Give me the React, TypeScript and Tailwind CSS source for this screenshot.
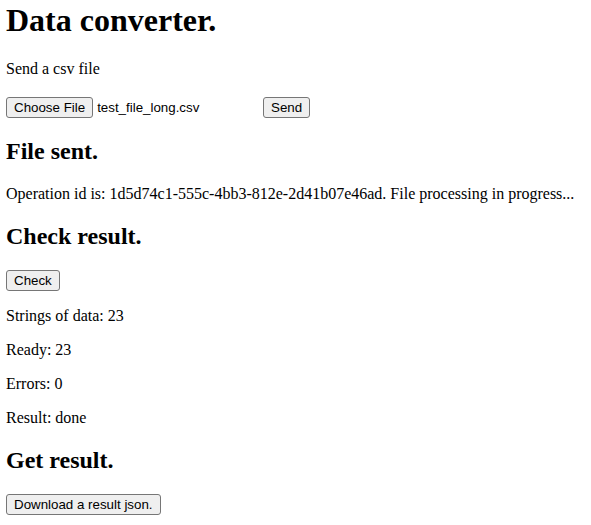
import React from "react";

const btn =
  "inline-block bg-[#efefef] border border-[#767676] rounded-[3px] px-[7px] py-[2px] text-[13.333px] leading-[normal] text-black font-['Liberation_Sans',Arial,sans-serif] align-baseline";

export default function App() {
  return (
    <div className="font-['Liberation_Serif','Times_New_Roman',serif] text-base leading-[normal] text-black bg-white pl-[6px] pt-[2px] min-h-[525px]">
      <h1 className="text-[32px] font-bold leading-[normal] m-0 mb-[21.44px]">Data converter.</h1>
      <p className="my-[16px]">Send a csv file</p>
      <div className="mt-[19px] mb-[16px]">
        <span className="inline-block w-[253px] whitespace-nowrap align-baseline">
          <button className={btn}>Choose File</button>
          <span className="ml-[4px] text-[13.333px] font-['Liberation_Sans',Arial,sans-serif]">test_file_long.csv</span>
        </span>{" "}
        <button className={btn}>Send</button>
      </div>
      <h2 className="text-[24px] font-bold leading-[normal] my-[19.92px]">File sent.</h2>
      <p className="my-[16px]">
        Operation id is: 1d5d74c1-555c-4bb3-812e-2d41b07e46ad. File processing in progress...
      </p>
      <h2 className="text-[24px] font-bold leading-[normal] my-[19.92px]">Check result.</h2>
      <div className="my-[16px]">
        <button className={btn}>Check</button>
      </div>
      <p className="my-[16px]">Strings of data: 23</p>
      <p className="my-[16px]">Ready: 23</p>
      <p className="my-[16px]">Errors: 0</p>
      <p className="my-[16px]">Result: done</p>
      <h2 className="text-[24px] font-bold leading-[normal] my-[19.92px]">Get result.</h2>
      <div className="my-[16px]">
        <button className={btn}>Download a result json.</button>
      </div>
    </div>
  );
}
